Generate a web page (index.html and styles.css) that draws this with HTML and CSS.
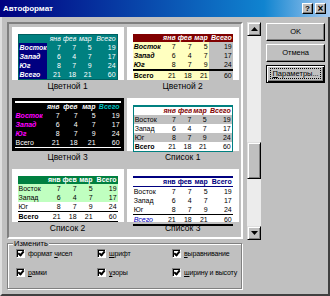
FILE: index.html
```html
<!DOCTYPE html>
<html lang="ru">
<head>
    <meta charset="UTF-8">
    <title>Автоформат</title>
    <link rel="stylesheet" href="styles.css">
</head>
<body>

<div class="dialog">
    <div class="titlebar">
        <span class="title">Автоформат</span>
        <div class="caption-btns">
            <span class="cbtn">?</span>
            <span class="cbtn close">×</span>
        </div>
    </div>

    <div class="body">
        <div class="top">
            <!-- Format gallery -->
            <div class="gallery">
                <div class="item">
                    <div class="preview color1">
                        <table>
                            <tr><th></th><th>янв</th><th>фев</th><th>мар</th><th>Всего</th></tr>
                            <tr><th>Восток</th><td>7</td><td>7</td><td>5</td><td>19</td></tr>
                            <tr><th>Запад</th><td>6</td><td>4</td><td>7</td><td>17</td></tr>
                            <tr><th>Юг</th><td>8</td><td>7</td><td>9</td><td>24</td></tr>
                            <tr class="total"><th>Всего</th><td>21</td><td>18</td><td>21</td><td>60</td></tr>
                        </table>
                    </div>
                    <div class="caption">Цветной 1</div>
                </div>
                <div class="item">
                    <div class="preview color2">
                        <table>
                            <tr><th></th><th>янв</th><th>фев</th><th>мар</th><th>Всего</th></tr>
                            <tr><th>Восток</th><td>7</td><td>7</td><td>5</td><td>19</td></tr>
                            <tr><th>Запад</th><td>6</td><td>4</td><td>7</td><td>17</td></tr>
                            <tr><th>Юг</th><td>8</td><td>7</td><td>9</td><td>24</td></tr>
                            <tr class="total"><th>Всего</th><td>21</td><td>18</td><td>21</td><td>60</td></tr>
                        </table>
                    </div>
                    <div class="caption">Цветной 2</div>
                </div>
                <div class="item">
                    <div class="preview color3">
                        <table>
                            <tr><th></th><th>янв</th><th>фев</th><th>мар</th><th>Всего</th></tr>
                            <tr><th>Восток</th><td>7</td><td>7</td><td>5</td><td>19</td></tr>
                            <tr><th>Запад</th><td>6</td><td>4</td><td>7</td><td>17</td></tr>
                            <tr><th>Юг</th><td>8</td><td>7</td><td>9</td><td>24</td></tr>
                            <tr class="total"><th>Всего</th><td>21</td><td>18</td><td>21</td><td>60</td></tr>
                        </table>
                    </div>
                    <div class="caption">Цветной 3</div>
                </div>
                <div class="item">
                    <div class="preview list1">
                        <table>
                            <tr><th></th><th>янв</th><th>фев</th><th>мар</th><th>Всего</th></tr>
                            <tr><th>Восток</th><td>7</td><td>7</td><td>5</td><td>19</td></tr>
                            <tr><th>Запад</th><td>6</td><td>4</td><td>7</td><td>17</td></tr>
                            <tr><th>Юг</th><td>8</td><td>7</td><td>9</td><td>24</td></tr>
                            <tr class="total"><th>Всего</th><td>21</td><td>18</td><td>21</td><td>60</td></tr>
                        </table>
                    </div>
                    <div class="caption">Список 1</div>
                </div>
                <div class="item">
                    <div class="preview list2">
                        <table>
                            <tr><th></th><th>янв</th><th>фев</th><th>мар</th><th>Всего</th></tr>
                            <tr><th>Восток</th><td>7</td><td>7</td><td>5</td><td>19</td></tr>
                            <tr><th>Запад</th><td>6</td><td>4</td><td>7</td><td>17</td></tr>
                            <tr><th>Юг</th><td>8</td><td>7</td><td>9</td><td>24</td></tr>
                            <tr class="total"><th>Всего</th><td>21</td><td>18</td><td>21</td><td>60</td></tr>
                        </table>
                    </div>
                    <div class="caption">Список 2</div>
                </div>
                <div class="item">
                    <div class="preview list3">
                        <table>
                            <tr><th></th><th>янв</th><th>фев</th><th>мар</th><th>Всего</th></tr>
                            <tr><th>Восток</th><td>7</td><td>7</td><td>5</td><td>19</td></tr>
                            <tr><th>Запад</th><td>6</td><td>4</td><td>7</td><td>17</td></tr>
                            <tr><th>Юг</th><td>8</td><td>7</td><td>9</td><td>24</td></tr>
                            <tr class="total"><th>Всего</th><td>21</td><td>18</td><td>21</td><td>60</td></tr>
                        </table>
                    </div>
                    <div class="caption">Список 3</div>
                </div>
            </div>

            <!-- Scrollbar -->
            <div class="scrollbar">
                <div class="sbtn">
                    <svg width="7" height="4" viewBox="0 0 7 4"><polygon points="3.5,0 7,4 0,4" fill="#000"/></svg>
                </div>
                <div class="track">
                    <div class="thumb"></div>
                </div>
                <div class="sbtn">
                    <svg width="7" height="4" viewBox="0 0 7 4"><polygon points="0,0 7,0 3.5,4" fill="#000"/></svg>
                </div>
            </div>

            <div class="buttons">
                <div class="btn">OK</div>
                <div class="btn">Отмена</div>
                <div class="btn focused"><span><u>П</u>араметры...</span></div>
            </div>
        </div>

        <fieldset class="group">
            <legend>Изменить</legend>
            <div class="options">
                <div class="opt"><span class="check"></span><span>формат <u>ч</u>исел</span></div>
                <div class="opt"><span class="check"></span><span><u>ш</u>рифт</span></div>
                <div class="opt"><span class="check"></span><span><u>в</u>ыравнивание</span></div>
                <div class="opt"><span class="check"></span><span><u>р</u>амки</span></div>
                <div class="opt"><span class="check"></span><span><u>у</u>зоры</span></div>
                <div class="opt"><span class="check"></span><span><u>ш</u>ирину и высоту</span></div>
            </div>
        </fieldset>
    </div>
</div>

</body>
</html>
```

FILE: styles.css
```css
/* Windows 98 dialog look */
body {
    margin: 0;
    background: #c0c0c0;
    font-family: 'Liberation Sans', Arial, sans-serif;
    font-size: 8px;
    color: #000;
}

.dialog {
    width: 330px;
    height: 296px;
    display: flex;
    flex-direction: column;
    background: #c0c0c0;
}

.titlebar {
    height: 17px;
    flex: none;
    display: flex;
    align-items: center;
    justify-content: space-between;
    padding: 0 4px 0 3px;
    background: linear-gradient(to right, #000080, #1084d0 80%, #a6caf0);
}

.title {
    color: #fff;
    font-weight: bold;
    font-size: 8px;
}

.caption-btns {
    display: flex;
    gap: 2px;
}

.cbtn {
    width: 11px;
    height: 11px;
    box-sizing: border-box;
    background: #c0c0c0;
    border: 1px solid;
    border-color: #fff #000 #000 #fff;
    box-shadow: inset -1px -1px #808080;
    font-weight: bold;
    font-size: 8px;
    line-height: 9px;
    text-align: center;
}

.cbtn.close {
    font-size: 10px;
}

.body {
    flex: 1;
    border-left: 2px solid #dfdfdf;
    border-right: 2px solid #404040;
    border-bottom: 2px solid #404040;
    padding: 5px 3px 0 5px;
}

.top {
    display: flex;
    align-items: flex-start;
    gap: 4px;
    height: 218px;
}

/* Gallery list */
.gallery {
    width: 237px;
    height: 217px;
    box-sizing: border-box;
    border: 2px solid;
    border-color: #808080 #fff #fff #808080;
    padding: 3px 1px 0 1px;
    display: grid;
    grid-template-columns: 1fr 1fr;
    grid-auto-rows: 71px;
    overflow: hidden;
}

.item {
    display: flex;
    flex-direction: column;
    align-items: center;
}

.preview {
    width: 112px;
    height: 53px;
    flex: none;
    box-sizing: border-box;
    background: #fff;
    padding: 7px 6px 1px 6px;
}

.caption {
    font-size: 8.5px;
    line-height: 12px;
}

.preview table {
    width: 100%;
    border-collapse: collapse;
    font-size: 7px;
    table-layout: fixed;
}

.preview th, .preview td {
    padding: 0 1px;
    height: 9px;
    line-height: 8px;
    text-align: right;
    white-space: nowrap;
    overflow: hidden;
}

.preview tr:first-child th {
    height: 8px;
}

.preview th:first-child {
    width: 26px;
    text-align: left;
}

.preview tr th:last-child, .preview tr td:last-child {
    width: 22px;
}

/* Цветной 1 */
.color1 table {
    background: #008080;
    color: #fff;
    border: 1px solid #006060;
}

.color1 tr:first-child th {
    font-weight: normal;
    font-style: italic;
}

.color1 th:first-child {
    background: #000080;
    font-style: italic;
}

.color1 tr:first-child th:first-child {
    background: #008080;
}

/* Цветной 2 */
.color2 table {
    background: #ffffc0;
}

.color2 tr:first-child th {
    background: #800000;
    color: #fff;
    font-style: italic;
}

.color2 th:first-child {
    font-style: italic;
}

.color2 td:last-child {
    background: #c0c0c0;
}

.color2 .total th, .color2 .total td {
    border-top: 2px solid #000;
    font-style: normal;
}

/* Цветной 3 */
.preview.color3 {
    border: 3px solid #000;
    padding: 2px 0 1px 0;
}

.color3 table {
    background: #000;
    color: #fff;
}

.color3 tr:first-child th {
    font-style: italic;
}

.color3 tr:first-child th:last-child {
    color: #00c0c0;
}

.color3 th:first-child {
    color: #ff00ff;
    font-style: italic;
}

.color3 .total th {
    color: #fff;
    font-weight: normal;
    font-style: normal;
}

/* Список 1 */
.list1 table {
    border: 1px solid #008080;
    border-top: 2px solid #008080;
}

.list1 tr:first-child th {
    color: #800000;
    font-style: italic;
}

.list1 tr:nth-child(2), .list1 tr:nth-child(4) {
    background: #c0c0c0;
}

.list1 tr:nth-child(2) th, .list1 tr:nth-child(3) th, .list1 tr:nth-child(4) th {
    font-weight: normal;
}

/* Список 2 */
.list2 tr:first-child {
    background: #008040;
    color: #fff;
}

.list2 tr:nth-child(2), .list2 tr:nth-child(3) {
    background: #c0ffc0;
}

.list2 tr:nth-child(2) th, .list2 tr:nth-child(3) th, .list2 tr:nth-child(4) th {
    font-weight: normal;
}

.list2 .total th, .list2 .total td {
    border-top: 1px solid #000;
    border-bottom: 1px solid #000;
}

/* Список 3 */
.list3 table {
    border-top: 2px solid #000080;
}

.list3 tr:first-child th {
    color: #000080;
    border-bottom: 1px solid #000080;
}

.list3 tr:nth-child(2) th, .list3 tr:nth-child(3) th, .list3 tr:nth-child(4) th {
    font-weight: normal;
}

.list3 .total th {
    color: #0000c0;
    font-weight: normal;
    font-style: italic;
}

.list3 .total th, .list3 .total td {
    border-top: 1px solid #000;
    border-bottom: 2px solid #000;
}

/* Scrollbar */
.scrollbar {
    width: 14px;
    height: 218px;
    display: flex;
    flex-direction: column;
    background: #ececec;
}

.sbtn {
    height: 14px;
    flex: none;
    box-sizing: border-box;
    background: #c0c0c0;
    border: 1px solid;
    border-color: #dfdfdf #000 #000 #dfdfdf;
    box-shadow: inset 1px 1px #fff, inset -1px -1px #808080;
    display: flex;
    align-items: center;
    justify-content: center;
}

.track {
    flex: 1;
    padding-top: 106px;
}

.thumb {
    height: 37px;
    box-sizing: border-box;
    background: #c0c0c0;
    border: 1px solid;
    border-color: #dfdfdf #000 #000 #dfdfdf;
    box-shadow: inset 1px 1px #fff, inset -1px -1px #808080;
}

/* Buttons */
.buttons {
    width: 59px;
    margin-left: 1px;
    padding-top: 1px;
    display: flex;
    flex-direction: column;
    gap: 3px;
}

.btn {
    height: 18px;
    box-sizing: border-box;
    background: #c0c0c0;
    border: 1px solid;
    border-color: #fff #000 #000 #fff;
    box-shadow: inset -1px -1px #808080;
    text-align: center;
    line-height: 16px;
    font-size: 7.5px;
}

.btn.focused {
    border-color: #000;
    box-shadow: inset 1px 1px #fff, inset -1px -1px #000, inset -2px -2px #808080;
}

.btn.focused span {
    outline: 1px dotted #000;
    padding: 0 1px;
}

/* Group box */
.group {
    margin: -1px 1px 0 0;
    padding: 0 0 6px 8px;
    width: 235px;
    box-sizing: border-box;
    border: 1px solid #808080;
    box-shadow: inset 1px 1px #fff, 1px 1px #fff;
}

.group legend {
    padding: 0 1px;
    margin-left: -3px;
    background: #c0c0c0;
    font-size: 7.5px;
}

.options {
    margin-top: -4px;
    display: grid;
    grid-template-columns: 81px 75px 1fr;
    grid-auto-rows: 19px;
    align-items: center;
}

.opt {
    display: flex;
    align-items: center;
    gap: 3px;
    white-space: nowrap;
    font-size: 7px;
    letter-spacing: -0.15px;
}

.check {
    width: 9px;
    height: 9px;
    flex: none;
    box-sizing: border-box;
    background: #fff;
    border: 1px solid;
    border-color: #808080 #fff #fff #808080;
    box-shadow: inset 1px 1px #000;
    position: relative;
}

.check::after {
    content: "";
    position: absolute;
    left: 2px;
    top: 0;
    width: 2px;
    height: 4px;
    border: solid #000;
    border-width: 0 2px 2px 0;
    transform: rotate(40deg);
}
```
